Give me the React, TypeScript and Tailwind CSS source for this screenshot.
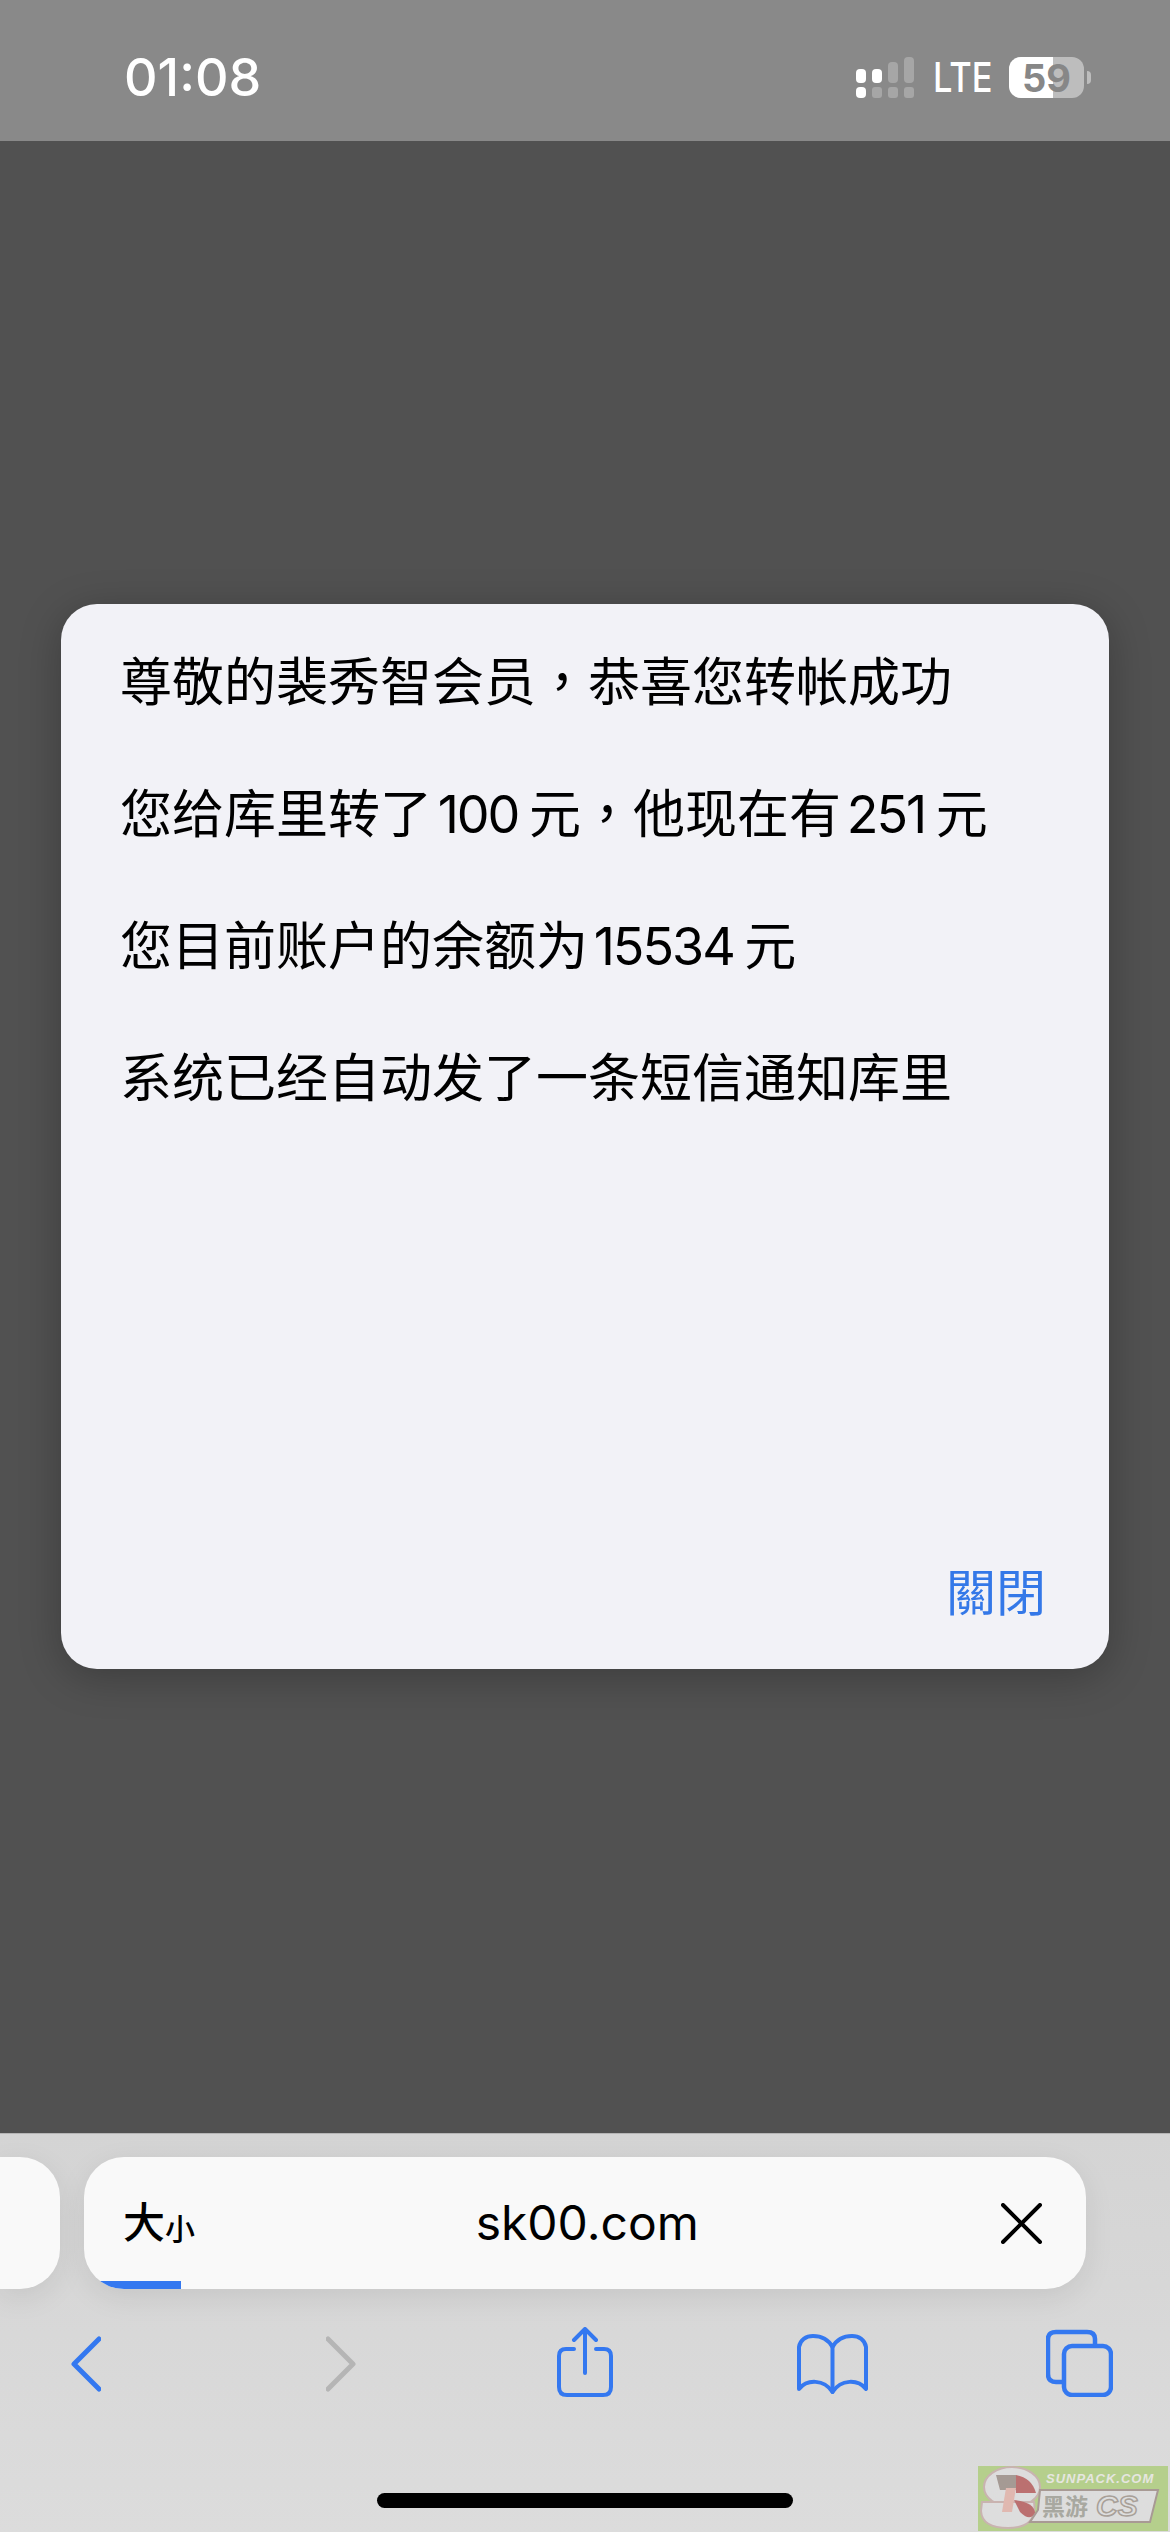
const cjk = { fontFamily: 'Inter, "Noto Sans CJK SC", sans-serif' };

function Comma() {
  return <span className="leading-none" style={{ fontFamily: '"Noto Sans CJK TC", sans-serif' }}>，</span>;
}

function Num({ children }: { children: string }) {
  return <span className="tracking-[-2px] mr-[5px]">{children}</span>;
}

function Signal() {
  return (
    <svg width="58" height="41" viewBox="0 0 58 41" className="block">
      <rect x="0" y="30" width="10" height="11" rx="4" fill="#fff" />
      <rect x="16" y="30" width="10" height="11" rx="3" fill="#a6a6a6" />
      <rect x="32" y="30" width="10" height="11" rx="3" fill="#a6a6a6" />
      <rect x="48" y="30" width="10" height="11" rx="3" fill="#a6a6a6" />
      <rect x="0" y="12" width="10" height="14" rx="4" fill="#fff" />
      <rect x="16" y="12" width="10" height="14" rx="4" fill="#fff" />
      <rect x="32" y="5" width="10" height="21" rx="4" fill="#a6a6a6" />
      <rect x="48" y="0" width="10" height="26" rx="4" fill="#a6a6a6" />
    </svg>
  );
}

function Battery() {
  return (
    <div className="flex items-center ml-[19px]">
      <div className="relative w-[75px] h-[41px] rounded-[12px] bg-[#bdbdbd]">
        <div className="w-[44px] h-full bg-white rounded-l-[12px]" />
        <div className="absolute inset-0 flex items-center justify-center text-[38px] font-bold leading-none text-[#878787]" style={{ fontFamily: "Inter, sans-serif" }}>
          59
        </div>
      </div>
      <div className="ml-[3px] w-[4px] h-[13px] rounded-r-full bg-[#bdbdbd]" />
    </div>
  );
}

function ToolbarIcons() {
  const blue = "#3478f0";
  return (
    <div className="flex items-start h-[70px] mt-[38px] pl-[71px]">
      <svg width="30" height="70" viewBox="0 0 30 70" fill="none" stroke={blue} strokeWidth="5" strokeLinecap="round" strokeLinejoin="round">
        <path d="M28 12 L3 37 L28 62" />
      </svg>
      <svg className="ml-[225px]" width="30" height="70" viewBox="0 0 30 70" fill="none" stroke="#b5b5b5" strokeWidth="5" strokeLinecap="round" strokeLinejoin="round">
        <path d="M2 12 L27 37 L2 62" />
      </svg>
      <svg className="ml-[201px]" width="56" height="70" viewBox="0 0 56 70" fill="none" stroke={blue} strokeWidth="4" strokeLinecap="round" strokeLinejoin="round">
        <path d="M17 22 H9 Q2 22 2 29 V60 Q2 68 10 68 H46 Q54 68 54 60 V29 Q54 22 47 22 H39" />
        <path d="M28 46 V2 M17 13 L28 2 L39 13" />
      </svg>
      <svg className="ml-[184px]" width="71" height="70" viewBox="0 0 71 70" fill="none" stroke={blue} strokeWidth="4" strokeLinecap="round" strokeLinejoin="round">
        <path d="M35.5 20 C31 12 24 9 16 9 C9 9 3 13 2 20 V62 C10 52 27 52 35.5 65 C44 52 61 52 69 62 V20 C68 13 62 9 55 9 C47 9 40 12 35.5 20 Z" />
        <path d="M35.5 20 V65" />
      </svg>
      <svg className="ml-[178px]" width="67" height="70" viewBox="0 0 67 70" fill="none" stroke={blue} strokeWidth="4.5" strokeLinejoin="round">
        <path d="M17 55 H10 Q2 55 2 47 V12 Q2 5 10 5 H41 Q49 5 49 12 V19" />
        <rect x="18" y="19" width="47" height="49" rx="8" />
      </svg>
    </div>
  );
}

function Watermark() {
  return (
    <div className="absolute left-[978px] top-[332px] w-[190px] h-[65px] overflow-hidden bg-[#b5cf8c]">
      <svg width="190" height="65" viewBox="0 0 190 65">
        <ellipse cx="34" cy="21" rx="28" ry="20" fill="#ddd" stroke="#c9b3b0" strokeWidth="2" />
        <path d="M18 9 H38 V24 H22 Z" fill="#a59a94" />
        <path d="M38 9 Q54 12 58 27 H38 Z" fill="#bb7070" />
        <path d="M4 36 H56 Q60 62 30 62 Q4 62 3 45 Z" fill="#ddd" stroke="#c9b3b0" strokeWidth="2" />
        <path d="M36 34 Q56 36 57 47 Q52 56 42 46 Z" fill="#bb7070" />
        <path d="M28 22 H38 L34 46 H24 Z" fill="#e0b8b0" />
        <path d="M62 24 H180 L172 56 H52 L60 44 Z" fill="#ddd" stroke="#a89a94" strokeWidth="2" />
        <text x="64" y="49" fontSize="23" fontWeight="700" fill="#a8a8a0" fontFamily="Noto Sans CJK SC, sans-serif">黑游</text>
        <text x="118" y="50" fontSize="30" fontWeight="700" fontStyle="italic" fill="none" stroke="#a8a098" strokeWidth="1.5" fontFamily="Liberation Sans, sans-serif">CS</text>
        <text x="68" y="17" fontSize="13" fontWeight="700" fontStyle="italic" fill="#e6e6e0" fontFamily="Liberation Sans, sans-serif" letterSpacing="1">SUNPACK.COM</text>
      </svg>
    </div>
  );
}

export default function App() {
  return (
    <div className="w-[1170px] h-[2532px] flex flex-col overflow-hidden bg-[#515151]" style={cjk}>
      <header className="h-[141px] shrink-0 bg-[#898989] flex items-start pt-[57px] pl-[124px]">
        <div className="text-[52px] leading-[41px] text-white font-medium w-[732px]">01:08</div>
        <Signal />
        <div className="ml-[19px] w-[57px] text-[41px] leading-[41px] text-white font-medium whitespace-nowrap origin-left scale-x-[0.84]">LTE</div>
        <Battery />
      </header>

      <main className="flex-1 pt-[463px] pl-[61px]">
        <div className="w-[1048px] h-[1065px] rounded-[36px] bg-[#f2f2f7] flex flex-col pt-[13px] pl-[59px] pr-[63px] pb-[53px] shadow-[0_8px_40px_rgba(0,0,0,0.25)]">
          <div className="flex-1 text-[52px] leading-[132px] text-black [word-spacing:-9px]">
            <p className="h-[132px] whitespace-nowrap">尊敬的裴秀智会员<Comma />恭喜您转帐成功</p>
            <p className="h-[132px] whitespace-nowrap">您给库里转了 <Num>100</Num> 元<Comma />他现在有 <Num>251</Num> 元</p>
            <p className="h-[132px] whitespace-nowrap">您目前账户的余额为 <Num>15534</Num> 元</p>
            <p className="h-[132px] whitespace-nowrap">系统已经自动发了一条短信通知库里</p>
          </div>
          <div className="text-right text-[50px] leading-[54px] text-[#3478e8]" style={{ fontFamily: '"Noto Sans CJK TC", sans-serif' }}>關閉</div>
        </div>
      </main>

      <footer className="relative h-[399px] shrink-0 bg-gradient-to-b from-[#d4d4d4] to-[#dcdcdc] border-t border-[#b5b5b5] pt-[23px]">
        <div className="flex h-[132px]">
          <div className="w-[60px] rounded-r-[40px] bg-[#f9f9f9] shadow-[0_8px_30px_rgba(0,0,0,0.08)]" />
          <div className="relative ml-[24px] w-[1002px] rounded-[40px] bg-[#f9f9f9] overflow-hidden flex items-center pl-[39px] pr-[44px] shadow-[0_8px_30px_rgba(0,0,0,0.08)]">
            <div className="w-[300px] flex items-end text-black leading-none font-medium">
              <span className="text-[42px]">大</span>
              <span className="text-[30px]">小</span>
            </div>
            <div className="w-[579px] pl-[53px] text-[48px] leading-none text-black">sk00.com</div>
            <svg width="41" height="41" viewBox="0 0 41 41" fill="none" stroke="#000" strokeWidth="4" strokeLinecap="round">
              <path d="M2 2 L39 39 M39 2 L2 39" />
            </svg>
            <div className="absolute left-0 bottom-0 w-[97px] h-[8px] bg-[#3478f0]" />
          </div>
        </div>
        <ToolbarIcons />
        <div className="mt-[96px] ml-[377px] w-[416px] h-[15px] rounded-full bg-black" />
        <Watermark />
      </footer>
    </div>
  );
}
